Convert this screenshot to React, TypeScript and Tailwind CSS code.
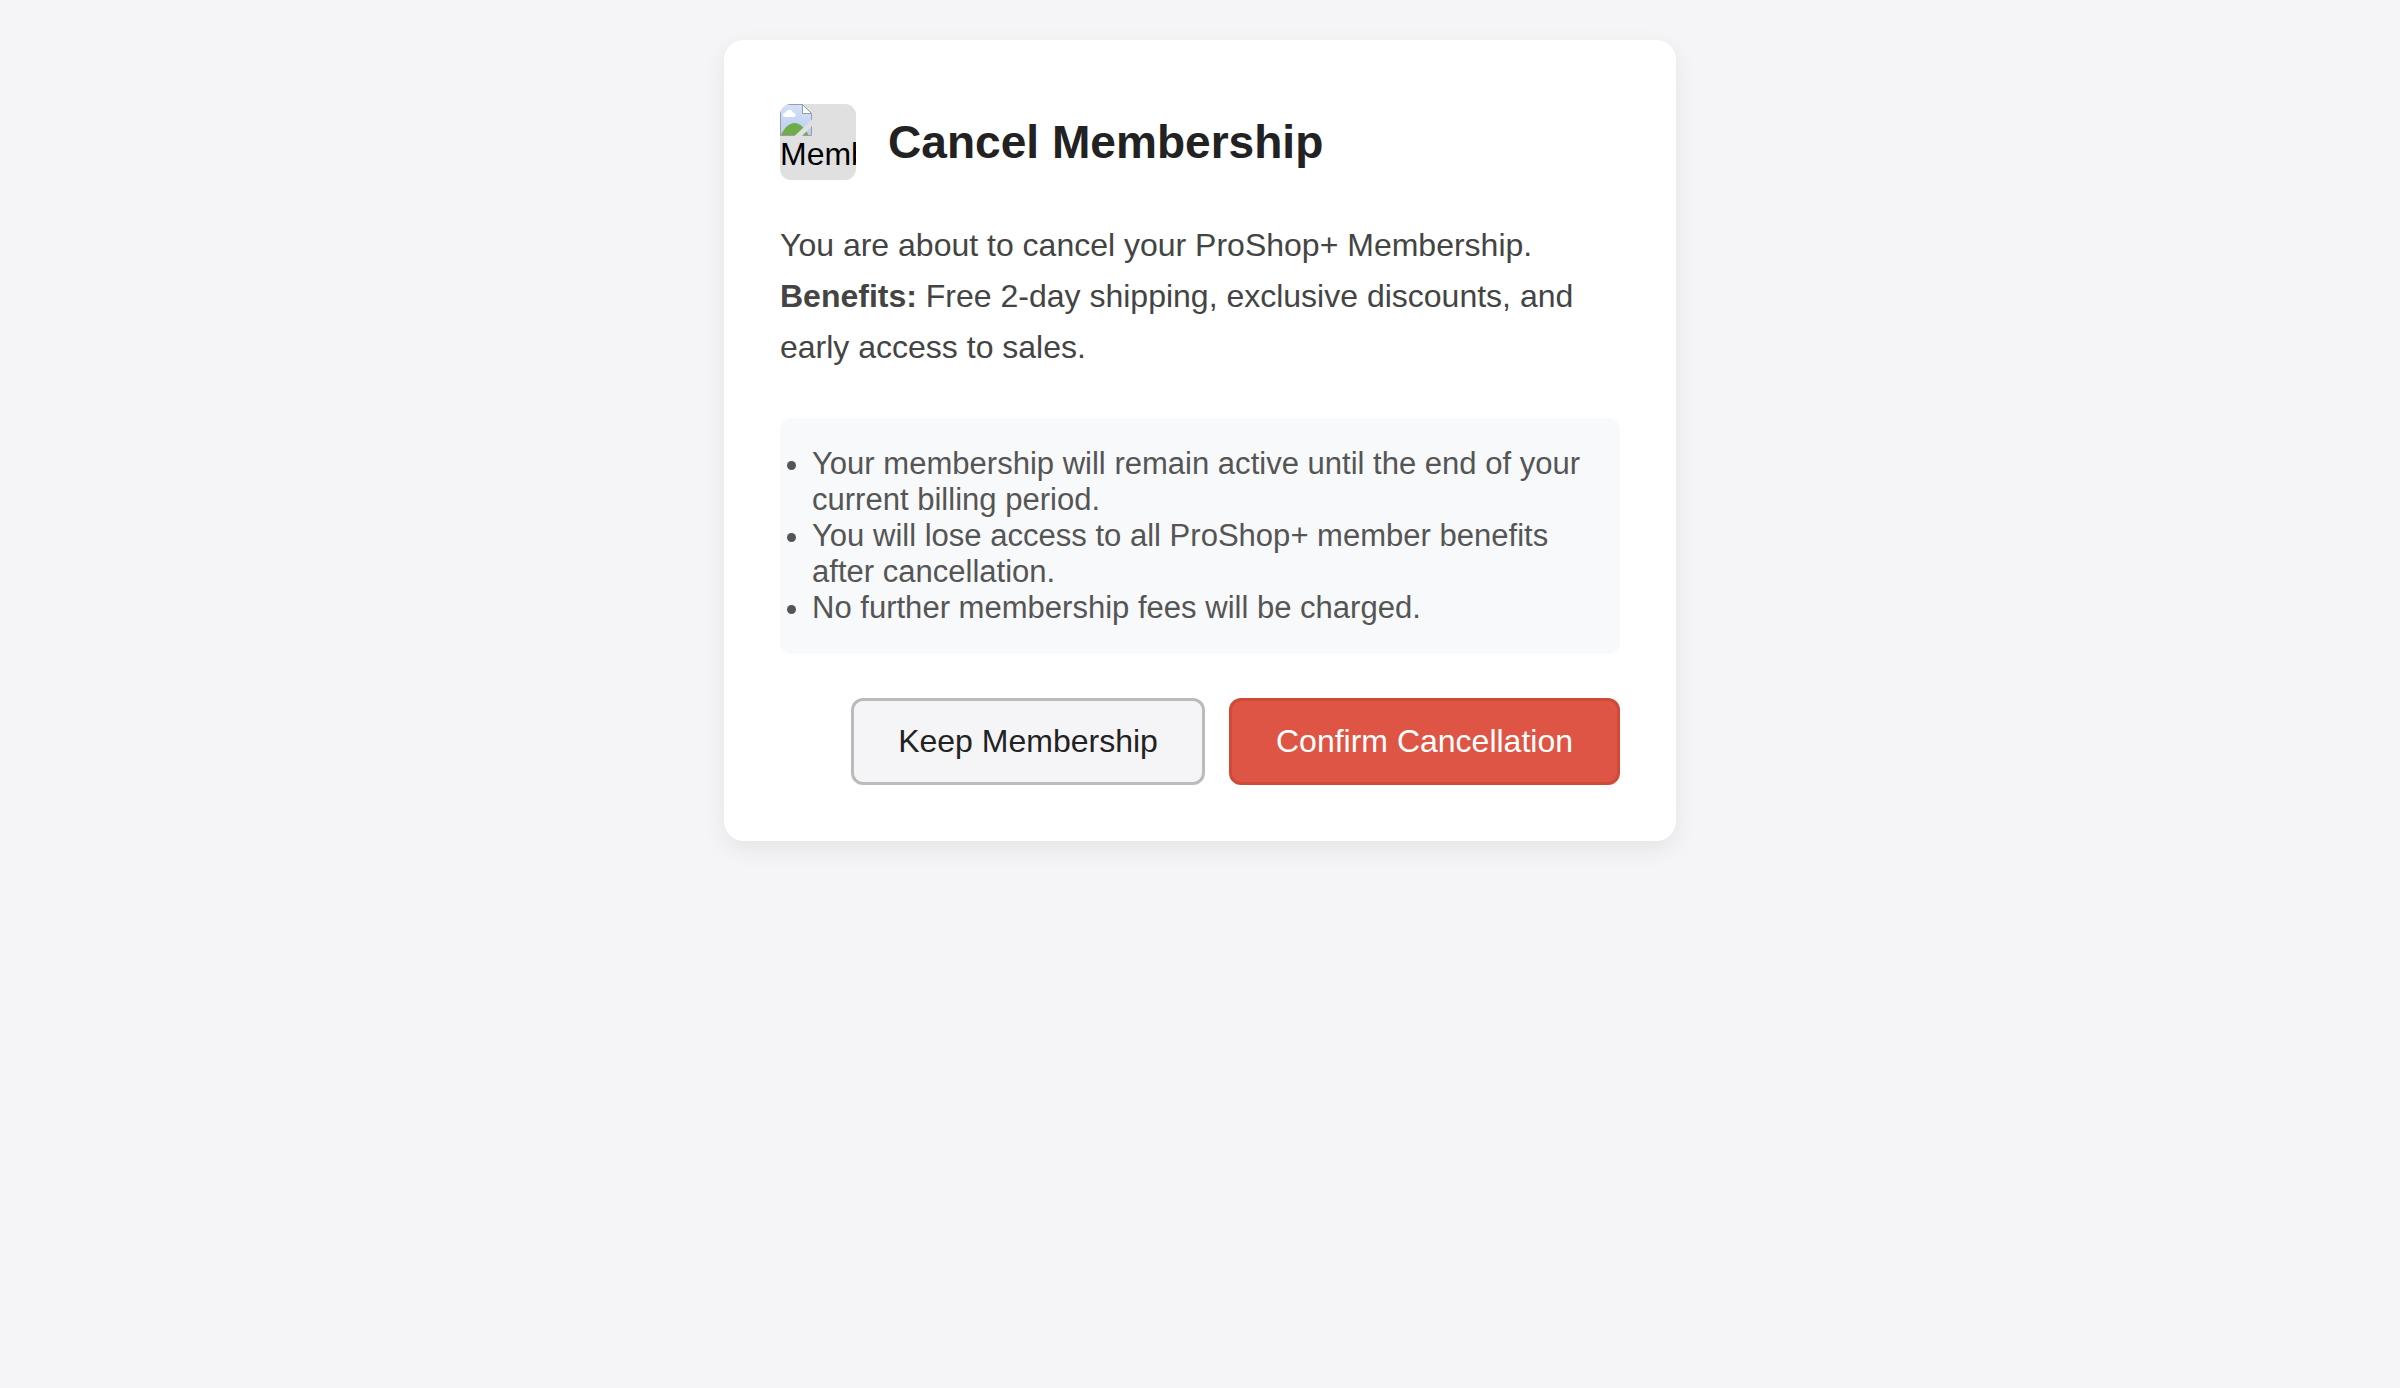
function BrokenImage() {
  return (
    <svg viewBox="0 0 32 32" className="block h-8 w-8" aria-hidden="true">
      <defs>
        <linearGradient id="sky" x1="0" y1="0" x2="0" y2="1">
          <stop offset="0" stopColor="#d3e0f8" />
          <stop offset="1" stopColor="#bccff0" />
        </linearGradient>
      </defs>
      <path d="M1 1H22.500L31 9.500V31H1Z" fill="url(#sky)" />
      <path d="M1 31C4 24.500 9 19 14.500 19C20 19 25 24 28.500 31Z" fill="#6fac4a" />
      <path d="M5.500 13C2 13 2 8.700 5.800 8.600C7 4.800 12.200 4.800 13 8.700C16.500 8.700 16.500 13 13.500 13Z" fill="#fff" />
      <path d="M22.500 1V9.500H31Z" fill="#fff" />
      <path d="M22.500 0.500H0.500V31.500H31.500V9.500L22.500 0.500V9.500H31.500" fill="none" stroke="#9a9da6" />
      <path d="M14.500 32L32 15.500V22L22 32Z" fill="#e0e0e0" />
    </svg>
  );
}

const notes = [
  "Your membership will remain active until the end of your current billing period.",
  "You will lose access to all ProShop+ member benefits after cancellation.",
  "No further membership fees will be charged.",
];

export default function App() {
  return (
    <div className="min-h-screen bg-[#f5f5f7] pt-10 font-['Liberation_Sans',Arial,sans-serif]">
      <main className="mx-auto h-[801px] w-[952px] rounded-[20px] bg-white px-14 pt-16 pb-14 shadow-[0_8px_24px_rgba(0,0,0,0.07)]">
        <header className="flex items-center gap-8">
          <div className="h-[76px] w-[76px] shrink-0 overflow-hidden rounded-[11px] bg-[#e0e0e0] text-[32px] leading-[37px] text-black">
            <BrokenImage />
            <div>Membership icon</div>
          </div>
          <h1 className="text-[46.08px] leading-[54px] font-bold text-[#222]">Cancel Membership</h1>
        </header>
        <p className="mt-10 text-[32px] leading-[51.2px] text-[#444]">
          You are about to cancel your ProShop+ Membership.
          <br />
          <strong>Benefits:</strong> Free 2-day shipping, exclusive discounts, and early access to sales.
        </p>
        <ul className="mt-11 list-outside list-disc rounded-xl bg-[#f8f9fb] py-7 pr-7 pl-8 text-[31.04px] leading-9 text-[#555]">
          {notes.map((note) => (
            <li key={note}>{note}</li>
          ))}
        </ul>
        <div className="mt-11 flex justify-end gap-6 text-[32px] leading-[37px]">
          <button className="h-[87px] w-[354px] rounded-xl border-3 border-[#bbb] bg-[#f5f5f7] whitespace-nowrap text-[#222]">
            Keep Membership
          </button>
          <button className="h-[87px] w-[391px] rounded-xl border-3 border-[#cf4a37] bg-[#df5545] whitespace-nowrap text-white">
            Confirm Cancellation
          </button>
        </div>
      </main>
    </div>
  );
}
